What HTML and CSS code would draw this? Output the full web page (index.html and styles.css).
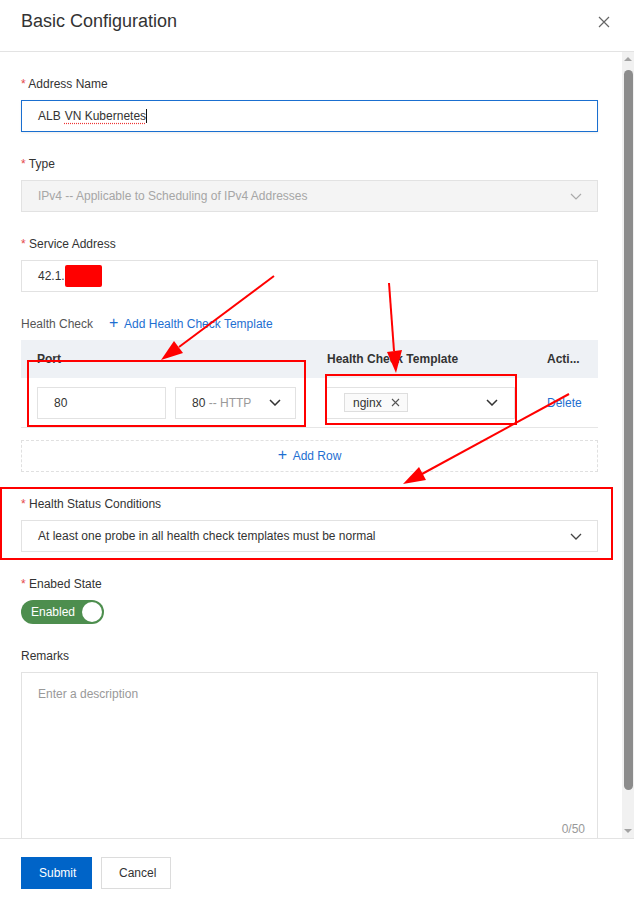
FILE: index.html
```html
<!DOCTYPE html>
<html>
<head>
<meta charset="utf-8">
<link rel="stylesheet" href="styles.css">
</head>
<body>
<div class="modal">
  <div class="header">
    <div class="title">Basic Configuration</div>
    <svg class="close" width="12" height="12" viewBox="0 0 12 12"><path d="M1 1L11 11M11 1L1 11" stroke="#666" stroke-width="1.2" fill="none"/></svg>
  </div>
  <div class="body">
    <div class="content">
      <div class="field">
        <div class="label"><span class="req">*</span> Address Name</div>
        <div class="input focus">ALB <span class="spell">VN Kubernetes</span><span class="caret"></span></div>
      </div>
      <div class="field">
        <div class="label"><span class="req">*</span> Type</div>
        <div class="input disabled"><span>IPv4 -- Applicable to Scheduling of IPv4 Addresses</span>
          <svg class="chev" width="12" height="7" viewBox="0 0 12 7"><path d="M1 1L6 6L11 1" stroke="#aaa" stroke-width="1.2" fill="none"/></svg></div>
      </div>
      <div class="field">
        <div class="label"><span class="req">*</span> Service Address</div>
        <div class="input plain">42.1.<span class="redact"></span></div>
      </div>
      <div class="field">
        <div class="label-row"><span class="label-plain">Health Check</span><span class="link"><span class="plus">+</span> Add Health Check Template</span></div>
        <div class="table">
          <div class="thead">
            <div class="c1">Port</div>
            <div class="c2">Health Check Template</div>
            <div class="c3">Acti...</div>
          </div>
          <div class="trow">
            <div class="c1 cell">
              <div class="input small port">80</div>
              <div class="input small proto"><span>80 <span class="muted">-- HTTP</span></span>
                <svg class="chev" width="12" height="7" viewBox="0 0 12 7"><path d="M1 1L6 6L11 1" stroke="#333" stroke-width="1.5" fill="none"/></svg></div>
            </div>
            <div class="c2 cell">
              <div class="input small tmpl"><span class="tag">nginx <svg width="9" height="9" viewBox="0 0 9 9"><path d="M1 1L8 8M8 1L1 8" stroke="#555" stroke-width="1.1" fill="none"/></svg></span>
                <svg class="chev" width="12" height="7" viewBox="0 0 12 7"><path d="M1 1L6 6L11 1" stroke="#333" stroke-width="1.5" fill="none"/></svg></div>
            </div>
            <div class="c3 cell"><span class="link">Delete</span></div>
          </div>
        </div>
        <div class="addrow"><span class="link"><span class="plus">+</span> Add Row</span></div>
      </div>
      <div class="field">
        <div class="label"><span class="req">*</span> Health Status Conditions</div>
        <div class="input"><span>At least one probe in all health check templates must be normal</span>
          <svg class="chev" width="12" height="7" viewBox="0 0 12 7"><path d="M1 1L6 6L11 1" stroke="#444" stroke-width="1.3" fill="none"/></svg></div>
      </div>
      <div class="field">
        <div class="label"><span class="req">*</span> Enabed State</div>
        <div class="switch"><span>Enabled</span><span class="knob"></span></div>
      </div>
      <div class="field">
        <div class="label">Remarks</div>
        <div class="textarea"><span class="placeholder">Enter a description</span><span class="count">0/50</span></div>
      </div>
    </div>
    <div class="scrollbar">
      <div class="arrow up"></div>
      <div class="thumb"></div>
      <div class="arrow down"></div>
    </div>
  </div>
  <div class="footer">
    <button class="btn primary">Submit</button>
    <button class="btn">Cancel</button>
  </div>
  <svg class="annot" width="634" height="901" viewBox="0 0 634 901">
    <g stroke="#ff0000" stroke-width="2" fill="none">
      <rect x="28" y="361" width="277" height="65"/>
      <rect x="326" y="375" width="190" height="49"/>
      <rect x="1" y="488" width="611" height="71"/>
      <line x1="274" y1="276" x2="179" y2="347"/>
      <line x1="389" y1="283" x2="394" y2="351"/>
      <line x1="569" y1="394" x2="422" y2="474"/>
    </g>
    <g fill="#ff0000">
      <polygon points="161,360 183,353 174,341"/>
      <polygon points="396,373 402,350 387,352"/>
      <polygon points="403,484 426,480 419,467"/>
    </g>
  </svg>
</div>
</body>
</html>
```
FILE: styles.css
```css
* { box-sizing: border-box; }
html, body { margin: 0; padding: 0; background: #fff; }
body {
  font-family: "Liberation Sans", Arial, sans-serif;
  font-size: 12px;
  color: #333;
}
.modal {
  position: relative;
  width: 634px;
  height: 901px;
  display: flex;
  flex-direction: column;
  overflow: hidden;
}
.header {
  height: 52px;
  flex: none;
  border-bottom: 1px solid #e3e3e3;
  display: flex;
  align-items: flex-start;
  justify-content: space-between;
  padding: 9px 24px 0 21px;
}
.title { font-size: 18px; color: #333; line-height: 24px; }
.close { margin-top: 7px; }
.body {
  flex: none;
  height: 786px;
  display: flex;
  overflow: hidden;
}
.content {
  width: 622px;
  flex: none;
  padding: 22px 24px 0 21px;
  overflow: hidden;
}
.field { margin-bottom: 22px; }
.label, .label-row {
  line-height: 20px;
  height: 18px;
  margin-bottom: 8px;
  color: #333;
}
.req { color: #e5484d; }
.label-row { display: flex; align-items: center; gap: 16px; padding-top: 2px; }
.label-plain { color: #555; }
.link { color: #1e6fd1; }
.plus { font-size: 16px; font-weight: 300; line-height: 12px; margin-right: 3px; }
.input {
  height: 32px;
  border: 1px solid #e2e2e2;
  background: #fff;
  padding: 0 16px;
  display: flex;
  align-items: center;
  justify-content: space-between;
  color: #333;
  white-space: nowrap;
}
.input.plain { justify-content: flex-start; }
.input.focus {
  border-color: #1a6fd0;
  justify-content: flex-start;
  box-shadow: 0 1px 2px rgba(0,0,0,0.08);
}
.input.disabled { background: #f4f4f4; color: #a6a6a6; }
.input .chev { flex: none; margin-right: -1px; }
.spell {
  margin-left: 4px;
  text-decoration: underline dotted #e33;
  text-underline-offset: 3px;
}
.caret { display: inline-block; width: 1px; height: 14px; background: #111; }
.redact {
  display: inline-block;
  width: 37px;
  height: 22px;
  background: #ff0000;
  border-radius: 2px;
}
.table { border-bottom: 1px solid #e6e6e6; }
.thead {
  display: flex;
  height: 38px;
  background: #eef1f5;
  align-items: center;
  font-weight: bold;
  color: #333;
}
.c1 { width: 290px; padding-left: 16px; flex: none; }
.c2 { width: 220px; padding-left: 16px; flex: none; }
.c3 { width: 66px; padding-left: 16px; flex: none; }
.thead .c3 { white-space: nowrap; }
.trow { display: flex; height: 49px; align-items: center; }
.cell { display: flex; gap: 9px; align-items: center; }
.c2.cell { padding-left: 15px; }
.input.small { height: 32px; }
.port { width: 129px; }
.proto { width: 121px; padding-right: 15px; }
.muted { color: #999; }
.tmpl { width: 189px; padding-left: 17px; padding-right: 17px; }
.tag {
  display: inline-flex;
  align-items: center;
  gap: 9px;
  height: 19px;
  padding: 0 7px 0 8px;
  border: 1px solid #dedede;
  background: #fafafa;
  color: #333;
}
.addrow {
  margin-top: 12px;
  height: 32px;
  border: 1px dashed #e0e0e0;
  display: flex;
  align-items: center;
  justify-content: center;
}
.switch {
  width: 83px;
  height: 24px;
  border-radius: 12px;
  background: #4d8e4e;
  display: flex;
  align-items: center;
  justify-content: space-between;
  padding: 0 2px 0 10px;
  color: #fff;
}
.knob {
  width: 20px;
  height: 20px;
  border-radius: 50%;
  background: #fff;
}
.textarea {
  position: relative;
  height: 190px;
  border: 1px solid #e2e2e2;
  padding: 14px 16px;
}
.placeholder { color: #999; }
.count { position: absolute; right: 12px; top: 149px; color: #999; }
.scrollbar {
  width: 12px;
  flex: none;
  background: #f1f1f1;
  display: flex;
  flex-direction: column;
  align-items: center;
  padding: 5px 0 5px;
}
.arrow { width: 0; height: 0; border-left: 4px solid transparent; border-right: 4px solid transparent; }
.arrow.up { border-bottom: 4px solid #a3a3a3; }
.arrow.down { border-top: 4px solid #a3a3a3; margin-top: auto; }
.thumb {
  margin-top: 9px;
  width: 9px;
  height: 720px;
  border-radius: 5px;
  background: #8c8c8c;
}
.footer {
  flex: 1;
  border-top: 1px solid #e3e3e3;
  padding: 18px 21px;
  display: flex;
  gap: 9px;
  align-items: flex-start;
}
.btn {
  height: 32px;
  padding: 0 17px;
  font-family: inherit;
  font-size: 12px;
  border: 1px solid #dcdcdc;
  background: #fff;
  color: #333;
  width: 70px;
}
.btn.primary { background: #0064c8; border-color: #0064c8; color: #fff; width: 71px; }
.annot { position: absolute; left: 0; top: 0; pointer-events: none; }
```
